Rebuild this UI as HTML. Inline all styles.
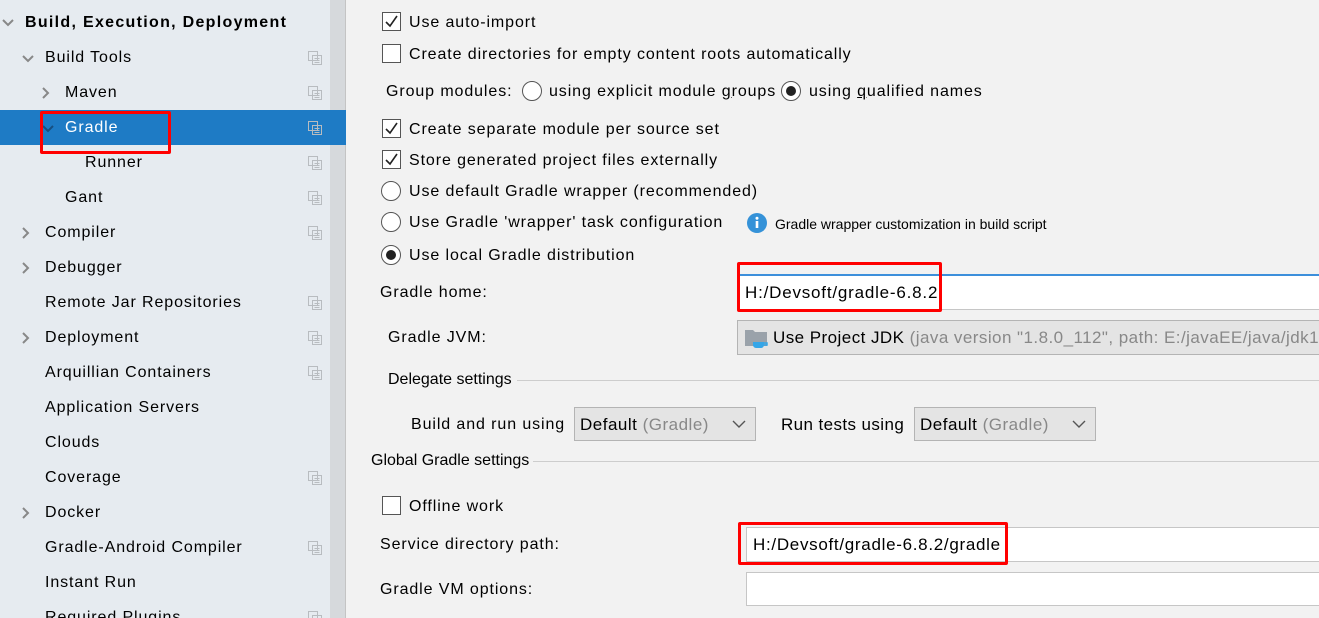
<!DOCTYPE html>
<html><head><meta charset="utf-8"><style>
*{margin:0;padding:0;box-sizing:border-box}
html,body{width:1319px;height:618px;overflow:hidden}
body{background:#f2f2f2;font-family:"Liberation Sans",Arial,sans-serif;font-size:16px;color:#000;position:relative}
.t{position:absolute;line-height:18px;white-space:nowrap;letter-spacing:0.9px}
.n{letter-spacing:0}
#left{position:absolute;left:0;top:0;width:330px;height:618px;background:#e6ebf0}
#sb{position:absolute;left:330px;top:0;width:16px;height:618px;background:#d6d9dc;border-right:1px solid #c4c4c4}
.sel{position:absolute;left:0;top:110px;width:346px;height:35px;background:#1e7bc5}
.ic{position:absolute;left:308px;width:14px;height:14px}
.chev{position:absolute;width:12px;height:12px}
.cb{position:absolute;left:382px;width:19px;height:19px;border:1px solid #555;background:#fff}
.rd{position:absolute;width:20px;height:20px;border:1px solid #555;border-radius:50%;background:#fff}
.rd.on::after{content:"";position:absolute;left:4px;top:4px;width:10px;height:10px;border-radius:50%;background:#222}
.box{position:absolute;background:#fff;border:1px solid #c6c6c6}
.combo{position:absolute;background:#e4e4e4;border:1px solid #b4b4b4}
.red{position:absolute;border:3px solid #f00;border-radius:2px}
.line{position:absolute;height:1px;background:#cdcdcd}
.g{color:#888}
</style></head><body>
<div id="left"></div>
<div id="sb"></div>
<div class="sel"></div>

<svg class="chev" style="left:2px;top:17px" viewBox="0 0 12 12"><path d="M1 3 L6 8 L11 3" fill="none" stroke="#888" stroke-width="2"/></svg>
<div class="t" style="left:25px;top:14px;font-weight:bold;letter-spacing:1.3px">Build, Execution, Deployment</div>
<svg class="chev" style="left:22px;top:53px" viewBox="0 0 12 12"><path d="M1 3 L6 8 L11 3" fill="none" stroke="#888" stroke-width="2"/></svg>
<div class="t" style="left:45px;top:49px">Build Tools</div>
<svg class="chev" style="left:40px;top:87px" viewBox="0 0 12 12"><path d="M3 1 L8 6 L3 11" fill="none" stroke="#888" stroke-width="2"/></svg>
<div class="t" style="left:65px;top:84px">Maven</div>
<svg class="chev" style="left:42px;top:123px" viewBox="0 0 12 12"><path d="M1 3 L6 8 L11 3" fill="none" stroke="#174f80" stroke-width="2"/></svg>
<div class="t" style="left:65px;top:119px;color:#fff">Gradle</div>
<div class="t" style="left:85px;top:154px">Runner</div>
<div class="t" style="left:65px;top:189px">Gant</div>
<svg class="chev" style="left:20px;top:227px" viewBox="0 0 12 12"><path d="M3 1 L8 6 L3 11" fill="none" stroke="#888" stroke-width="2"/></svg>
<div class="t" style="left:45px;top:224px">Compiler</div>
<svg class="chev" style="left:20px;top:262px" viewBox="0 0 12 12"><path d="M3 1 L8 6 L3 11" fill="none" stroke="#888" stroke-width="2"/></svg>
<div class="t" style="left:45px;top:259px">Debugger</div>
<div class="t" style="left:45px;top:294px">Remote Jar Repositories</div>
<svg class="chev" style="left:20px;top:332px" viewBox="0 0 12 12"><path d="M3 1 L8 6 L3 11" fill="none" stroke="#888" stroke-width="2"/></svg>
<div class="t" style="left:45px;top:329px">Deployment</div>
<div class="t" style="left:45px;top:364px">Arquillian Containers</div>
<div class="t" style="left:45px;top:399px">Application Servers</div>
<div class="t" style="left:45px;top:434px">Clouds</div>
<div class="t" style="left:45px;top:469px">Coverage</div>
<svg class="chev" style="left:20px;top:507px" viewBox="0 0 12 12"><path d="M3 1 L8 6 L3 11" fill="none" stroke="#888" stroke-width="2"/></svg>
<div class="t" style="left:45px;top:504px">Docker</div>
<div class="t" style="left:45px;top:539px">Gradle-Android Compiler</div>
<div class="t" style="left:45px;top:574px">Instant Run</div>
<div class="t" style="left:45px;top:609px">Required Plugins</div>

<svg width="0" height="0" style="position:absolute"><defs><g id="cp"><rect x="0.5" y="0.5" width="9" height="9" fill="none" stroke="#b8bcc0"/><rect x="4.5" y="4.5" width="9" height="9" fill="none" stroke="#b8bcc0"/><path d="M6.5 7.5h5M6.5 9.5h5M6.5 11.5h5" stroke="#b8bcc0"/></g></defs></svg>
<svg class="ic" style="top:51px"><use href="#cp"/></svg>
<svg class="ic" style="top:86px"><use href="#cp"/></svg>
<svg class="ic" style="top:121px"><use href="#cp"/></svg>
<svg class="ic" style="top:156px"><use href="#cp"/></svg>
<svg class="ic" style="top:191px"><use href="#cp"/></svg>
<svg class="ic" style="top:226px"><use href="#cp"/></svg>
<svg class="ic" style="top:296px"><use href="#cp"/></svg>
<svg class="ic" style="top:331px"><use href="#cp"/></svg>
<svg class="ic" style="top:366px"><use href="#cp"/></svg>
<svg class="ic" style="top:471px"><use href="#cp"/></svg>
<svg class="ic" style="top:541px"><use href="#cp"/></svg>
<svg class="ic" style="top:611px"><use href="#cp"/></svg>

<div class="red" style="left:40px;top:111px;width:131px;height:43px"></div>

<!-- right -->
<div class="cb" style="top:12px"><svg width="17" height="17" viewBox="0 0 17 17"><path d="M3 9 L7 13 L14 3" fill="none" stroke="#222" stroke-width="1.6"/></svg></div>
<div class="t" style="left:409px;top:14px">Use auto-import</div>
<div class="cb" style="top:44px"></div>
<div class="t" style="left:409px;top:46px">Create directories for empty content roots automatically</div>
<div class="t" style="left:386px;top:83px">Group modules:</div>
<div class="rd" style="left:522px;top:81px"></div>
<div class="t" style="left:549px;top:83px">using explicit module <u>g</u>roups</div>
<div class="rd on" style="left:781px;top:81px"></div>
<div class="t" style="left:809px;top:83px">using <u>q</u>ualified names</div>
<div class="cb" style="top:119px"><svg width="17" height="17" viewBox="0 0 17 17"><path d="M3 9 L7 13 L14 3" fill="none" stroke="#222" stroke-width="1.6"/></svg></div>
<div class="t" style="left:409px;top:121px">Create separate module per source set</div>
<div class="cb" style="top:150px"><svg width="17" height="17" viewBox="0 0 17 17"><path d="M3 9 L7 13 L14 3" fill="none" stroke="#222" stroke-width="1.6"/></svg></div>
<div class="t" style="left:409px;top:152px">Store generated project files externally</div>
<div class="rd" style="left:381px;top:181px"></div>
<div class="t" style="left:409px;top:183px">Use default Gradle wrapper (recommended)</div>
<div class="rd" style="left:381px;top:212px"></div>
<div class="t" style="left:409px;top:214px">Use Gradle 'wrapper' task configuration</div>
<svg style="position:absolute;left:747px;top:213px" width="20" height="20" viewBox="0 0 20 20"><circle cx="10" cy="10" r="10" fill="#3592d8"/><rect x="8.7" y="8" width="2.6" height="7" fill="#fff"/><circle cx="10" cy="5.3" r="1.5" fill="#fff"/></svg>
<div class="t n" style="left:775px;top:215px;font-size:14px">Gradle wrapper customization in build script</div>
<div class="rd on" style="left:381px;top:245px"></div>
<div class="t" style="left:409px;top:247px">Use local Gradle distribution</div>

<div class="t" style="left:380px;top:284px">Gradle home:</div>
<div class="box" style="left:737px;top:274px;width:600px;height:36px;border-top:2px solid #3d8fdb"></div>
<div class="t" style="left:745px;top:284px;font-size:17px;letter-spacing:0.8px">H:/Devsoft/gradle-6.8.2</div>
<div class="red" style="left:737px;top:262px;width:205px;height:50px"></div>

<div class="t" style="left:388px;top:329px">Gradle JVM:</div>
<div class="combo" style="left:737px;top:320px;width:600px;height:35px"></div>
<svg style="position:absolute;left:744px;top:327px" width="26" height="22" viewBox="0 0 26 22"><path d="M1 3h8l2 2h12v14H1z" fill="#9aa2aa"/><path d="M9 15h11v3a3 3 0 0 1-3 3h-5a3 3 0 0 1-3-3z" fill="#35a6e8"/><path d="M20 16h3v2h-3" fill="none" stroke="#35a6e8" stroke-width="1.5"/></svg>
<div class="t" style="left:773px;top:329px;font-size:17px;letter-spacing:0.45px">Use Project JDK <span class="g">(java version "1.8.0_112", path: E:/javaEE/java/jdk1.8</span></div>

<div class="t n" style="left:388px;top:371px">Delegate settings</div>
<div class="line" style="left:517px;top:380px;width:802px"></div>
<div class="t" style="left:411px;top:416px">Build and run using</div>
<div class="combo" style="left:574px;top:407px;width:182px;height:34px"></div>
<div class="t" style="left:580px;top:416px;font-size:17px;letter-spacing:0.5px">Default <span class="g">(Gradle)</span></div>
<svg style="position:absolute;left:732px;top:419px" width="14" height="10" viewBox="0 0 14 10"><path d="M1 2 L7 8 L13 2" fill="none" stroke="#555" stroke-width="1.4"/></svg>
<div class="t" style="left:781px;top:416px;font-size:17px;letter-spacing:0.4px">Run tests using</div>
<div class="combo" style="left:914px;top:407px;width:182px;height:34px"></div>
<div class="t" style="left:920px;top:416px;font-size:17px;letter-spacing:0.5px">Default <span class="g">(Gradle)</span></div>
<svg style="position:absolute;left:1072px;top:419px" width="14" height="10" viewBox="0 0 14 10"><path d="M1 2 L7 8 L13 2" fill="none" stroke="#555" stroke-width="1.4"/></svg>

<div class="t n" style="left:371px;top:452px">Global Gradle settings</div>
<div class="line" style="left:533px;top:461px;width:786px"></div>
<div class="cb" style="top:496px"></div>
<div class="t" style="left:409px;top:498px">Offline work</div>
<div class="t" style="left:380px;top:536px">Service directory path:</div>
<div class="box" style="left:746px;top:527px;width:600px;height:35px"></div>
<div class="t" style="left:753px;top:536px;font-size:17px;letter-spacing:0.7px">H:/Devsoft/gradle-6.8.2/gradle</div>
<div class="red" style="left:738px;top:522px;width:270px;height:43px"></div>
<div class="t" style="left:380px;top:581px">Gradle VM options:</div>
<div class="box" style="left:746px;top:572px;width:600px;height:34px"></div>
</body></html>
